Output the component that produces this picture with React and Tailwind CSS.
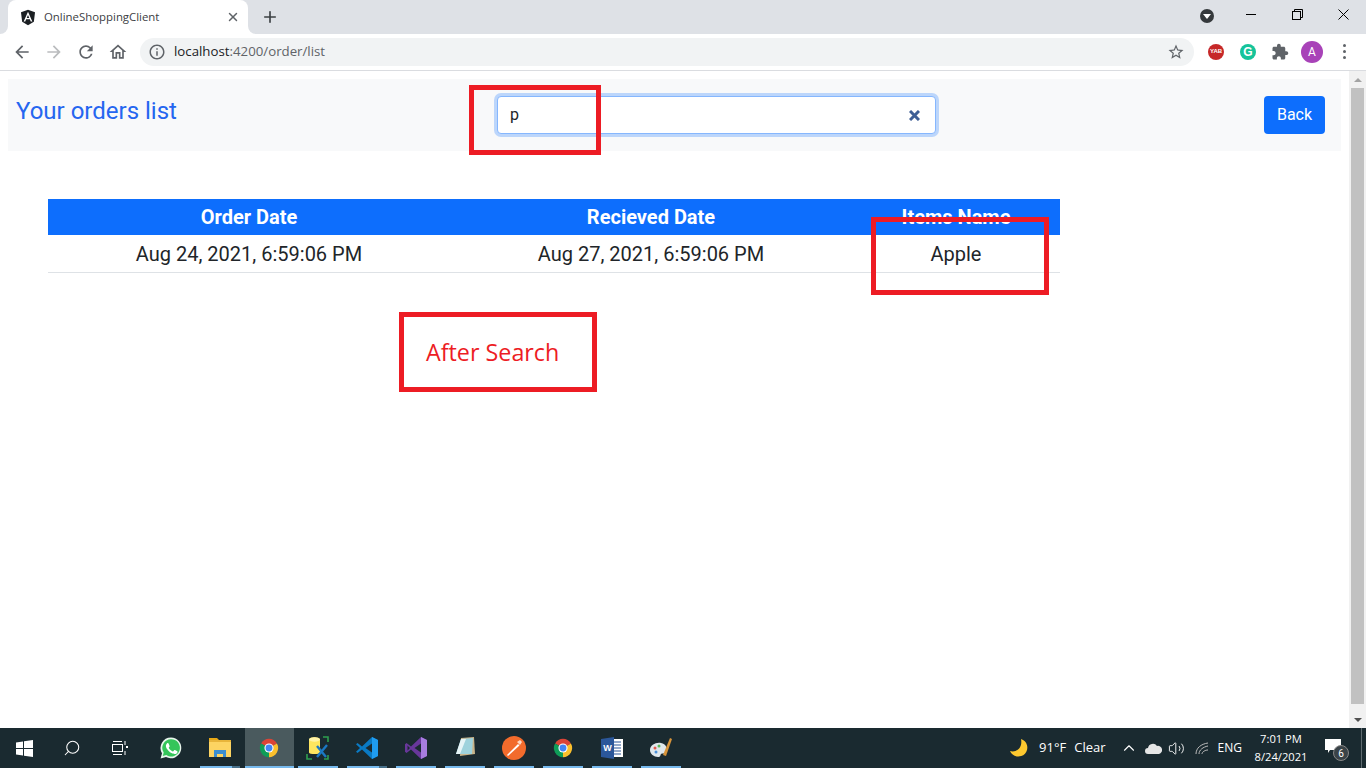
import { X, Plus, Search, ChevronUp, Volume2 } from 'lucide-react';

function Mat({ d, size = 20, className = '' }) {
  return (
    <svg width={size} height={size} viewBox="0 0 24 24" fill="currentColor" className={className}>
      <path d={d} />
    </svg>
  );
}

const chromeLogo = (
  <svg width="22" height="22" viewBox="0 0 48 48">
    <path d="M24 24 L6.7 14 A20 20 0 0 1 41.3 14 Z" fill="#db4437" />
    <path d="M24 24 L41.3 14 A20 20 0 0 1 24 44 Z" fill="#fbc02d" />
    <path d="M24 24 L24 44 A20 20 0 0 1 6.7 14 Z" fill="#0f9d58" />
    <circle cx="24" cy="24" r="10" fill="#fff" />
    <circle cx="24" cy="24" r="7.5" fill="#4285f4" />
  </svg>
);

const taskIcons = [
  {
    key: 'whatsapp', line: false,
    icon: (
      <svg width="24" height="24" viewBox="0 0 24 24">
        <path d="M12 1.5a10.4 10.4 0 0 0-9 15.7L1.600 22.500l5.400-1.400A10.400 10.400 0 1 0 12 1.500z" fill="#e8f5ec" />
        <path d="M12 3.200a8.700 8.700 0 0 0-7.300 13.400l-.9 3.400 3.500-.9A8.700 8.700 0 1 0 12 3.200z" fill="#35c55a" />
        <path d="M8.900 7c-.3 0-.7.1-1 .5-.4.5-1 1.200-1 2.500 0 1.400 1 2.800 1.200 3 .2.200 2 3.200 4.900 4.300 2.400.900 2.900.700 3.400.700.500-.100 1.700-.700 1.900-1.300.200-.700.200-1.200.200-1.300-.100-.200-.300-.300-.600-.400l-2-1c-.300-.100-.500-.100-.700.200l-.900 1.100c-.200.200-.300.200-.600.100-1.700-.800-2.800-1.600-3.900-3.400-.200-.300 0-.400.100-.600l.700-.900c.100-.200.100-.400 0-.500l-.900-2.200C9.400 7.100 9.200 7 8.900 7z" fill="#fff" />
      </svg>
    ),
  },
  {
    key: 'explorer', line: true, dim: true,
    icon: (
      <svg width="22" height="20" viewBox="0 0 22 20">
        <path d="M0 0h8l2 2H0z" fill="#e8a917" />
        <rect x="0" y="2" width="22" height="17" fill="#fcd462" />
        <rect x="0" y="2" width="22" height="2" fill="#e8b53a" />
        <path d="M5 19v-7h12v7h-3v-3H8v3z" fill="#3b8ed0" />
      </svg>
    ),
  },
  { key: 'chrome', active: true, line: true, icon: chromeLogo },
  {
    key: 'tool', line: true,
    icon: (
      <svg width="24" height="24" viewBox="0 0 24 24">
        <path d="M1 18v5h5M17 1h5v5M22 19v4h-4" stroke="#2e9e4f" strokeWidth="1.600" fill="none" />
        <path d="M3 3.500c0-3 11-3 11 0v13c0 2-11 2-11 0z" fill="#fde55f" />
        <ellipse cx="8.500" cy="3.500" rx="5.500" ry="2.200" fill="#fff3a8" />
        <path d="M11 10l9 11M21 9l-10 12" stroke="#1b78c2" strokeWidth="2.400" />
      </svg>
    ),
  },
  {
    key: 'vscode', line: true, dim: true,
    icon: (
      <svg width="24" height="24" viewBox="0 0 24 24">
        <path d="M17 1l6 3v16l-6 3-10-9.500L2.500 17 1 15.800 5 12 1 8.200 2.500 7 7 10.500z" fill="#0a7ac4" />
        <path d="M17 1l6 3v16l-6 3z" fill="#1f9cf0" />
        <path d="M17 7.500L10.500 12l6.500 4.500z" fill="#1a2a30" />
      </svg>
    ),
  },
  {
    key: 'vs', line: true,
    icon: (
      <svg width="24" height="24" viewBox="0 0 24 24">
        <path d="M17 1l6 3v16l-6 3-10-9.500L2.500 17 1 15.800V8.200L2.500 7 7 10.500z" fill="#68379b" />
        <path d="M17 1l6 3v16l-6 3z" fill="#a77de0" />
        <path d="M17 7.500L10.500 12l6.500 4.500zM3.500 9.500v5L6 12z" fill="#1a2a30" />
      </svg>
    ),
  },
  {
    key: 'notepad', line: true,
    icon: (
      <svg width="24" height="24" viewBox="0 0 24 24">
        <path d="M8 2l13-1 1 17-15 2z" fill="#c9b48a" />
        <path d="M8 3l12-1-1 16H3z" fill="#9ed2dc" />
        <path d="M8 3l5 0-6 15H3z" fill="#e6f4f6" />
      </svg>
    ),
  },
  {
    key: 'postman', line: true,
    icon: (
      <svg width="24" height="24" viewBox="0 0 24 24">
        <circle cx="12" cy="12" r="12" fill="#f26b2c" />
        <path d="M5 19L16 8l1.500 1.500L6 20z" fill="#fff" />
        <path d="M15 6l3-2 2 2-2 3z" fill="#ffd9c4" />
      </svg>
    ),
  },
  { key: 'chrome2', line: true, icon: chromeLogo },
  {
    key: 'word', line: true,
    icon: (
      <svg width="24" height="24" viewBox="0 0 24 24">
        <rect x="10" y="3" width="13" height="18" fill="#fff" />
        <path d="M13 6h8M13 9h8M13 12h8M13 15h8M13 18h8" stroke="#2b579a" strokeWidth="1.200" />
        <path d="M1 3l13-2v22L1 21z" fill="#2b579a" />
        <text x="7.500" y="15" fontSize="9" fontWeight="700" fill="#fff" textAnchor="middle" fontFamily="Liberation Sans">W</text>
      </svg>
    ),
  },
  {
    key: 'paint', line: true,
    icon: (
      <svg width="24" height="24" viewBox="0 0 24 24">
        <path d="M1 14c0-5 6-8 11-7 5 1 7 5 5 9-1 2-4 1-5 2s0 3-3 3c-4 0-8-3-8-7z" fill="#dfe7ec" />
        <circle cx="6" cy="12" r="1.500" fill="#e25a4e" />
        <circle cx="10" cy="10" r="1.500" fill="#5cb85c" />
        <circle cx="7" cy="16" r="1.500" fill="#4a90d9" />
        <path d="M14 19L21 2l2 1-6 17z" fill="#d8943a" />
      </svg>
    ),
  },
];

export default function App() {
  return (
    <div className="h-screen w-full flex flex-col overflow-hidden bg-white relative font-['Roboto',sans-serif]">
      {/* tab strip */}
      <div className="h-[34px] bg-[#dee1e6] flex shrink-0">
        <div className="w-2 h-2 self-end bg-white">
          <div className="w-2 h-2 bg-[#dee1e6] rounded-br-lg" />
        </div>
        <div className="w-[240px] h-[34px] bg-white rounded-t-lg flex items-center pl-[12px] pr-[8px]">
          <svg width="16" height="17" viewBox="0 0 24 24">
            <path d="M12 .5L1.500 4.300l1.700 14L12 23.500l8.800-5.200 1.700-14z" fill="#1b1f23" />
            <path d="M12 3.500L5.500 18h2.400l1.300-3.300h5.600l1.300 3.300h2.400zM10.100 12.700L12 8.200l1.900 4.500z" fill="#fff" />
          </svg>
          <span className="ml-[8px] text-[11.4px] text-[#3c4043] font-['Open_Sans',sans-serif] flex-1">OnlineShoppingClient</span>
          <X size={14} strokeWidth={2.5} className="text-[#5f6368]" />
        </div>
        <div className="w-2 h-2 self-end bg-white">
          <div className="w-2 h-2 bg-[#dee1e6] rounded-bl-lg" />
        </div>
        <Plus size={18} strokeWidth={2.200} className="ml-[5px] mt-[8px] text-[#3c4043]" />
        <div className="flex-1" />
        <div className="self-stretch flex items-start">
          <div className="mt-[9px] mr-[14px] w-[14px] h-[14px] rounded-full bg-[#35393c] flex items-center justify-center">
            <div className="w-0 h-0 border-l-[4px] border-r-[4px] border-t-[5px] border-l-transparent border-r-transparent border-t-white" />
          </div>
          <div className="w-[46px] h-[28px] flex items-center justify-center">
            <div className="w-[10px] h-px bg-black" />
          </div>
          <div className="w-[46px] h-[28px] flex items-center justify-center">
            <svg width="11" height="11" viewBox="0 0 11 11" fill="none" stroke="#000">
              <rect x="0.500" y="2.500" width="8" height="8" />
              <path d="M2.500 2.500v-2h8v8h-2" />
            </svg>
          </div>
          <div className="w-[46px] h-[28px] flex items-center justify-center">
            <svg width="11" height="11" viewBox="0 0 11 11" stroke="#000"><path d="M.5.500l10 10M10.500.500l-10 10" /></svg>
          </div>
        </div>
      </div>

      {/* toolbar */}
      <div className="h-[37px] bg-white border-b border-[#dadce0] flex items-center shrink-0 pb-[1px] pl-[6px]">
        <div className="w-[32px] flex justify-center text-[#5f6368]">
          <Mat d="M20 11H7.830l5.590-5.590L12 4l-8 8 8 8 1.410-1.410L7.830 13H20v-2z" />
        </div>
        <div className="w-[32px] flex justify-center text-[#babcbe]">
          <Mat d="M12 4l-1.410 1.410L16.170 11H4v2h12.170l-5.580 5.590L12 20l8-8z" />
        </div>
        <div className="w-[32px] flex justify-center text-[#5f6368]">
          <Mat d="M17.650 6.350A7.958 7.958 0 0 0 12 4c-4.420 0-7.990 3.580-7.990 8s3.570 8 7.990 8c3.730 0 6.840-2.550 7.730-6h-2.080A5.990 5.990 0 0 1 12 18c-3.310 0-6-2.690-6-6s2.690-6 6-6c1.660 0 3.140.690 4.220 1.780L13 11h7V4l-2.350 2.350z" />
        </div>
        <div className="w-[32px] flex justify-center text-[#5f6368]">
          <Mat d="M12 5.690l5 4.500V18h-2v-6H9v6H7v-7.810l5-4.500M12 3L2 12h3v8h6v-6h2v6h6v-8h3L12 3z" />
        </div>
        <div className="ml-[6px] w-[1054px] h-[28px] rounded-full bg-[#f1f3f4] flex items-center pl-[8px] pr-[8px]">
          <Mat size={18} className="text-[#5f6368]" d="M11 7h2v2h-2zm0 4h2v6h-2zm1-9C6.480 2 2 6.480 2 12s4.480 10 10 10 10-4.480 10-10S17.520 2 12 2zm0 18c-4.410 0-8-3.590-8-8s3.590-8 8-8 8 3.590 8 8-3.590 8-8 8z" />
          <span className="ml-[8px] text-[13.25px] text-[#202124] font-['Open_Sans',sans-serif] flex-1">
            localhost<span className="text-[#5f6368]">:4200/order/list</span>
          </span>
          <Mat size={18} className="text-[#5f6368] -translate-x-[1px]" d="M22 9.240l-7.190-.62L12 2 9.190 8.630 2 9.240l5.460 4.730L5.820 21 12 17.270 18.180 21l-1.630-7.030L22 9.240zM12 15.400l-3.760 2.270 1-4.280-3.320-2.880 4.380-.38L12 6.100l1.710 4.040 4.380.38-3.320 2.880 1 4.280L12 15.400z" />
        </div>
        <div className="ml-[6px] w-[32px] flex justify-center">
          <div className="w-[16px] h-[16px] rounded-full bg-[#c62828] flex items-center justify-center text-[6px] font-bold text-white font-['Liberation_Sans',sans-serif]">YAB</div>
        </div>
        <div className="w-[32px] flex justify-center">
          <div className="w-[16px] h-[16px] rounded-full bg-[#15c39a] flex items-center justify-center text-[12px] font-bold text-white font-['Liberation_Sans',sans-serif]">G</div>
        </div>
        <div className="w-[32px] flex justify-center text-[#5f6368]">
          <Mat size={18} d="M20.500 11H19V7c0-1.100-.9-2-2-2h-4V3.500C13 2.120 11.880 1 10.500 1S8 2.120 8 3.500V5H4c-1.100 0-1.990.9-1.990 2v3.800H3.500c1.490 0 2.700 1.210 2.700 2.700s-1.210 2.700-2.700 2.700H2V20c0 1.100.9 2 2 2h3.800v-1.500c0-1.490 1.210-2.700 2.700-2.700 1.490 0 2.700 1.210 2.700 2.700V22H17c1.100 0 2-.9 2-2v-4h1.500c1.380 0 2.500-1.120 2.500-2.500S21.880 11 20.500 11z" />
        </div>
        <div className="w-[32px] flex justify-center">
          <div className="w-[22px] h-[22px] rounded-full bg-[#a842b8] flex items-center justify-center text-[12px] text-white">A</div>
        </div>
        <div className="ml-[15px] flex flex-col gap-[3px]">
          <div className="w-[3px] h-[3px] rounded-full bg-[#5f6368]" />
          <div className="w-[3px] h-[3px] rounded-full bg-[#5f6368]" />
          <div className="w-[3px] h-[3px] rounded-full bg-[#5f6368]" />
        </div>
      </div>

      {/* page + scrollbar */}
      <div className="flex-1 flex min-h-0">
        <div className="flex-1 min-w-0 pt-[8px] px-[8px]">
          <div className="h-[72px] w-[1333px] bg-[#f8f9fa] flex items-start pl-[8px] pr-[16px]">
            <div className="w-[481px] pt-[14px] text-[24px] leading-[36px] text-[#2566f0]">Your orders list</div>
            <div className="mt-[17px] w-[439px] h-[38px] bg-white border border-[#86b7fe] rounded-[4px] shadow-[0_0_0_3px_#bcd6fb] flex items-center pl-[12px] pr-[15px]">
              <span className="text-[16px] text-[#212529] flex-1 -mt-[1px]">p</span>
              <svg width="11" height="11" viewBox="0 0 11 11" stroke="#3e5f96" strokeWidth="3"><path d="M1 1l9 9M10 1l-9 9" /></svg>
            </div>
            <div className="flex-1" />
            <button className="mt-[17px] w-[61px] h-[38px] bg-[#0d6efd] rounded-[4px] text-white text-[16px]">Back</button>
          </div>

          <div className="mt-[48px] ml-[40px] w-[1012px]">
            <div className="grid grid-cols-[402px_402px_208px] h-[36px] items-center bg-[#0d6efd] text-white text-[20px] font-bold text-center">
              <div>Order Date</div>
              <div>Recieved Date</div>
              <div>Items Name</div>
            </div>
            <div className="grid grid-cols-[402px_402px_208px] h-[38px] items-center border-b border-[#dee2e6] text-[#212529] text-[20px] text-center">
              <div>Aug 24, 2021, 6:59:06 PM</div>
              <div>Aug 27, 2021, 6:59:06 PM</div>
              <div>Apple</div>
            </div>
          </div>
        </div>

        <div className="w-[17px] shrink-0 bg-[#f1f1f1] flex flex-col items-center">
          <div className="h-[17px] flex items-center justify-center">
            <div className="w-0 h-0 border-l-[4px] border-r-[4px] border-b-[4px] border-l-transparent border-r-transparent border-b-[#a3a3a3]" />
          </div>
          <div className="h-[616px] w-[13px] bg-[#c1c1c1]" />
          <div className="flex-1" />
          <div className="h-[17px] flex items-center justify-center">
            <div className="w-0 h-0 border-l-[4px] border-r-[4px] border-t-[4px] border-l-transparent border-r-transparent border-t-[#505050]" />
          </div>
        </div>
      </div>

      {/* taskbar */}
      <div className="h-[40px] bg-[#1a2a30] flex items-stretch shrink-0 text-white">
        <div className="w-[48px] flex items-center justify-center">
          <svg width="17" height="17" viewBox="0 0 17 17" fill="#fff">
            <path d="M0 2.400l7-1v6.600H0zM8 1.300L17 0v8H8zM0 9h7v6.600l-7-1zM8 9h9v8l-9-1.300z" />
          </svg>
        </div>
        <div className="w-[48px] flex items-center justify-center">
          <Search size={18} strokeWidth={1.400} className="-scale-x-100" />
        </div>
        <div className="w-[48px] flex items-center justify-center">
          <svg width="17" height="16" viewBox="0 0 17 16" fill="none" stroke="#fff">
            <path d="M1 1.500h9M1 14.500h9" />
            <rect x="0.500" y="4.500" width="10" height="7" />
            <path d="M13 1v4M13 11v4" />
            <rect x="14" y="6" width="2" height="2" fill="#fff" stroke="none" />
          </svg>
        </div>
        <div className="w-[3px]" />
        {taskIcons.map((t) => (
          <div key={t.key} className={`w-[49px] pr-[1px] flex flex-col items-center justify-center relative ${t.active ? 'bg-[#4a5a5e]' : ''}`}>
            {t.icon}
            {t.line && (
              <div className={`absolute bottom-0 h-[2px] bg-[#76b9ed] ${t.active ? 'left-0 right-0' : 'left-[4px] right-[5px]'}`} />
            )}
            {t.dim && <div className="absolute bottom-0 left-[36px] right-[5px] h-[2px] bg-[#47708a]" />}
          </div>
        ))}
        <div className="flex-1" />
        <div className="flex items-center">
          <svg width="20" height="20" viewBox="0 0 20 20"><path d="M12 1a9 9 0 1 1-11 12c5 2 13-2 11-12z" fill="#fdc82f" /></svg>
          <span className="ml-[10px] text-[13px] font-['Open_Sans',sans-serif]">91°F</span>
          <span className="ml-[8px] text-[13px] font-['Open_Sans',sans-serif]">Clear</span>
          <ChevronUp size={18} strokeWidth={1.500} className="ml-[14px]" />
          <svg className="ml-[7px]" width="17" height="11" viewBox="0 0 17 11"><path d="M3 11a3 3 0 0 1 0-6 5 5 0 0 1 9-2 4 4 0 0 1 2 8z" fill="#e6e6e6" /></svg>
          <Volume2 size={17} strokeWidth={1.300} className="ml-[6px]" />
          <svg className="ml-[10px]" width="15" height="13" viewBox="0 0 15 13" fill="none" stroke="#bbb">
            <path d="M1 12C1 6 6 2 13 1M4 12c0-4 4-7 9-8M7 12c0-2 3-4 6-4" />
          </svg>
          <span className="ml-[8px] text-[12px] font-['Open_Sans',sans-serif]">ENG</span>
          <div className="ml-[6px] w-[66px] text-[11.2px] leading-[18px] text-center font-['Open_Sans',sans-serif]">
            <div>7:01 PM</div>
            <div>8/24/2021</div>
          </div>
          <div className="ml-[11px] w-[26px] h-full relative flex items-center">
            <svg width="16" height="14" viewBox="0 0 16 14" className="-mt-[5px]"><path d="M0 0h16v11H5l-2 3v-3H0z" fill="#fff" /></svg>
            <div className="absolute left-[8px] top-[17px] w-[16px] h-[16px] rounded-full bg-[#3a4347] border border-[#888] flex items-center justify-center text-[10px]">6</div>
          </div>
          <div className="ml-[10px] w-[5px] h-full border-l border-[#5f6b70]" />
        </div>
      </div>

      {/* red annotation boxes over the screenshot */}
      <div className="absolute left-[469px] top-[85px] w-[132px] h-[70px] border-[5px] border-[#ed1c24]" />
      <div className="absolute left-[871px] top-[217px] w-[178px] h-[78px] border-[5px] border-[#ed1c24]" />
      <div className="absolute left-[399px] top-[312px] w-[198px] h-[80px] border-[5px] border-[#ed1c24] flex items-center pl-[22px] text-[23.3px] text-[#ed1c24] font-['Open_Sans',sans-serif]">After Search</div>
    </div>
  );
}
